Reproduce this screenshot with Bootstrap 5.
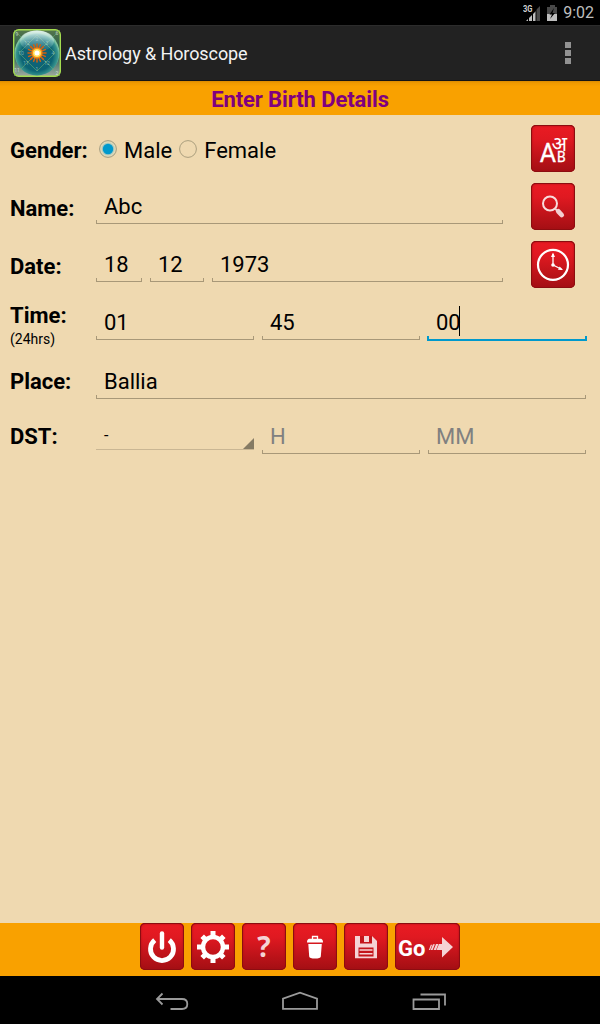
<!DOCTYPE html>
<html lang="en">
<head>
<meta charset="utf-8">
<meta name="viewport" content="width=device-width, initial-scale=1">
<title>Astrology &amp; Horoscope</title>
<link rel="stylesheet" href="https://cdn.jsdelivr.net/npm/bootstrap@5.3.0/dist/css/bootstrap.min.css">
<style>
body{font-family:Roboto,"Noto Sans",sans-serif;font-size:22px;line-height:26px;color:#000;background:#efd9b0;height:1024px;overflow:hidden}
svg{display:block;flex:none}
.status-bar{height:25px;background:#000;color:#bebebe;font-size:16px;line-height:25px;padding-right:6px}
.action-bar{height:56px;background:#222;border-top:1px solid #2c2c2c;border-bottom:1px solid #141414;color:#f3f3f3;font-size:18px;padding:0 29px 0 13px}
.app-name{letter-spacing:-.09px;padding-top:2px}
.page-title{height:34px;background:linear-gradient(#d98a00 0,#f09a00 2px,#f39d00 4px,#f9a100 5px);color:#800080;line-height:38px;letter-spacing:-.1px}
.form-area{padding:6px 13px 0 10px}
.line{height:58px}
.line-place{height:59px}
.lbl{width:86px;font-weight:700;flex:none}
.lbl small{display:block;font-size:14px;line-height:20px;font-weight:400}
.inputs{gap:8px}
.inputs.short{width:407px;flex:none}
.fld{position:relative;height:36px;padding:6px 8px 0;flex:1 1 0;white-space:nowrap}
.fld::after{content:"";position:absolute;left:0;right:0;bottom:0;height:4px;border:1px solid #a89878;border-top:0}
.fld.focused::after{left:-1px;right:-1px;bottom:-1px;height:5px;border:2px solid #0099cc;border-top:0}
.caret{display:inline-block;width:1px;height:30px;background:#000;margin:-4px 0 0 -2px;vertical-align:top}
.w-day{flex:0 0 46px}.w-mon{flex:0 0 54px}
.hint{color:#808080}
.spin{height:32px;font-size:16px;line-height:26px;padding-top:5px}
.spin::after{height:1px;border:0;background:#c9b693}
.spin svg{position:absolute;right:0;bottom:0}
.tile{width:44px;height:47px;border-radius:5px;background:linear-gradient(#ea1b23,#e01921 30%,#b81218 75%,#a30f14);border:0;padding:0;box-shadow:inset 0 0 0 1px #8c0d10,inset 0 0 2px 1px #a81116;flex:none}
.tile.wide{width:65px}
.side{margin-left:28px}
.tool-bar{height:53px;background:#f9a100;gap:7px}
.nav-keys{height:48px;background:#000}
</style>
</head>
<body class="d-flex flex-column m-0">
<div class="status-bar d-flex justify-content-end align-items-center">
  <svg width="18" height="18" viewBox="0 0 18 18"><path d="M3 17L13 7v10z" fill="#bebebe"/><path d="M13 6l4-4v15h-4z" fill="#484848"/><path d="M5.500 8v9M9.500 8v9M13 4v13" stroke="#000"/><path d="M0 1h9.500v7H0z" fill="#000"/><text x="0" y="8" font-size="9" font-weight="700" textLength="9.500" lengthAdjust="spacingAndGlyphs" fill="#d0d0d0" font-family="Roboto">3G</text></svg>
  <svg class="ms-1 me-1" width="14" height="18" viewBox="0 0 14 18"><path d="M2 3h3V1h5v2h2v14H2z" fill="#484848"/><path d="M2 10h10v7H2z" fill="#bebebe"/><path d="M9 4L4.500 10.500H7L5 15l5-6H7.500z" fill="#000"/></svg>
  <span>9:02</span>
</div>
<header class="action-bar d-flex align-items-center">
  <svg width="48" height="48" viewBox="0 0 48 48">
    <defs>
      <radialGradient id="orb" cx=".5" cy=".55" r=".5"><stop offset="0" stop-color="#12627a"/><stop offset=".7" stop-color="#0c6474"/><stop offset=".92" stop-color="#38958e"/><stop offset="1" stop-color="#7ec3a0"/></radialGradient>
      <linearGradient id="shine" x2="0" y2="1"><stop offset="0" stop-color="#fff" stop-opacity=".8"/><stop offset="1" stop-color="#8fd0d0" stop-opacity=".05"/></linearGradient>
      <linearGradient id="plate" x2="0" y2="1"><stop offset="0" stop-color="#56764c"/><stop offset=".5" stop-color="#1d584c"/><stop offset="1" stop-color="#a0aaa0"/></linearGradient>
    </defs>
    <rect x=".7" y=".7" width="46.600" height="46.600" rx="5" fill="url(#plate)" stroke="#a4dc50" stroke-width="1.400"/>
    <circle cx="24" cy="24" r="22.500" fill="url(#orb)"/>
    <path d="M1 1l46 46M47 1L1 47M24 6l18 18-18 18L6 24z" fill="none" stroke="#6cb070" stroke-width=".9" opacity=".6"/>
    <ellipse cx="24" cy="12" rx="17" ry="10.500" fill="url(#shine)"/>
    <g fill="#b8dcdc" font-size="5" opacity=".6" text-anchor="middle" font-family="Roboto"><text x="24" y="12">2</text><text x="14" y="16">12</text><text x="34" y="16">3</text><text x="8" y="26">10</text><text x="40" y="26">4</text><text x="13" y="36">11</text><text x="34" y="36">12</text><text x="24" y="42">1</text><text x="4" y="43" fill="#fff">11</text><text x="44" y="46" fill="#fff">2</text><text x="44" y="6" fill="#fff">6</text><text x="4" y="7" fill="#fff">9</text></g>
    <g stroke="#d4600f" stroke-width="1.500" stroke-linecap="round"><path d="M24 15v18M15 24h18M17.600 17.600l12.800 12.800M30.400 17.600L17.600 30.400M20.600 15.700l6.800 16.600M27.400 15.700l-6.800 16.600M15.700 20.600l16.600 6.800M15.700 27.400l16.600-6.800"/></g>
    <circle cx="24" cy="24" r="5.500" fill="#f28c18"/><circle cx="24" cy="24" r="4" fill="#ffe25c"/><circle cx="24" cy="24" r="2.500" fill="#fff"/>
  </svg>
  <span class="app-name ms-1">Astrology &amp; Horoscope</span>
  <svg class="ms-auto" width="6" height="22" viewBox="0 0 6 22" fill="#929292"><path d="M0 0h6v6H0zM0 8h6v6H0zM0 16h6v6H0z"/></svg>
</header>
<div class="page-title text-center fw-bold">Enter Birth Details</div>

<main class="form-area flex-grow-1">
  <div class="line d-flex">
    <div class="lbl" style="padding-top:17px">Gender:</div>
    <div class="inputs short d-flex" style="padding-top:17px;gap:0">
      <svg style="margin:2px 7px 0 3px" width="18" height="18" viewBox="0 0 18 18"><circle cx="9" cy="9" r="8.400" fill="#ddd8b8" stroke="#a39c80"/><circle cx="9" cy="9" r="6.300" fill="#a5c8c0"/><circle cx="9" cy="9" r="5.200" fill="#0099cc"/></svg>
      <span>Male</span>
      <svg style="margin:2px 7px 0" width="18" height="18" viewBox="0 0 18 18"><circle cx="9" cy="9" r="8.400" fill="none" stroke="#ab9f7e"/></svg>
      <span>Female</span>
    </div>
    <button class="tile side mt-1"><svg width="44" height="47" viewBox="0 0 44 47" fill="#fff"><text x="8.700" y="37" font-size="25" font-family="Roboto" stroke="#fff" stroke-width=".3">A</text><text x="26" y="37" font-size="14" font-family="Roboto" stroke="#fff" stroke-width=".3">B</text><text x="20.500" y="25.500" font-size="20" textLength="15.500" lengthAdjust="spacingAndGlyphs" font-family="'Noto Sans Devanagari','Noto Sans',sans-serif">अ</text></svg></button>
  </div>

  <div class="line d-flex">
    <div class="lbl" style="padding-top:17px">Name:</div>
    <div class="inputs short d-flex" style="padding-top:9px"><div class="fld">Abc</div></div>
    <button class="tile side mt-1"><svg width="44" height="47" viewBox="0 0 44 47"><circle cx="19" cy="20.500" r="7" fill="none" stroke="#f8dcdc" stroke-width="2"/><path d="M24 25.500l3 3" stroke="#f3cfd0" stroke-width="2"/><path d="M27.300 28.300l3.400 3.700" stroke="#f3cfd0" stroke-width="4.800" stroke-linecap="round"/></svg></button>
  </div>

  <div class="line d-flex">
    <div class="lbl" style="padding-top:17px">Date:</div>
    <div class="inputs short d-flex" style="padding-top:9px"><div class="fld w-day">18</div><div class="fld w-mon">12</div><div class="fld">1973</div></div>
    <button class="tile side mt-1"><svg width="44" height="47" viewBox="0 0 44 47"><circle cx="22" cy="23.800" r="15" fill="none" stroke="#fff" stroke-width="2.200"/><path d="M22 24V13M22 24l9 4.500" stroke="#fff" stroke-width="1.300"/><path d="M22 11.500l2 4.500h-4zM32 29l-5-.3 1.700-3.200z" fill="#fff"/><circle cx="22" cy="24" r="1.800" fill="#fff"/></svg></button>
  </div>

  <div class="line d-flex">
    <div class="lbl" style="padding-top:8px">Time:<small>(24hrs)</small></div>
    <div class="inputs d-flex flex-grow-1" style="padding-top:9px;padding-right:1px"><div class="fld">01</div><div class="fld">45</div><div class="fld focused">00<span class="caret"></span></div></div>
  </div>

  <div class="line line-place d-flex">
    <div class="lbl" style="padding-top:16px">Place:</div>
    <div class="inputs d-flex flex-grow-1" style="padding-top:10px;padding-right:1px"><div class="fld">Ballia</div></div>
  </div>

  <div class="line d-flex">
    <div class="lbl" style="padding-top:12px">DST:</div>
    <div class="inputs d-flex flex-grow-1" style="padding-top:6px;padding-right:1px"><div class="fld spin">-<svg width="12" height="12" viewBox="0 0 12 12"><path d="M12 0v12H0z" fill="#857b64"/></svg></div><div class="fld hint">H</div><div class="fld hint">MM</div></div>
  </div>
</main>

<footer class="tool-bar d-flex justify-content-center align-items-start">
  <button class="tile"><svg width="44" height="47" viewBox="0 0 44 47" fill="none" stroke="#fff"><path d="M14.700 17.200a11.500 11.500 0 1 0 14.600 0" stroke-width="4.800"/><path d="M22 10.500v14" stroke-width="4.400" stroke-linecap="round"/></svg></button>
  <button class="tile"><svg width="44" height="47" viewBox="0 0 44 47" fill="none" stroke="#fff"><circle cx="22" cy="24" r="10" stroke-width="4.400"/><path d="M22 8v5M22 35v5M6 24h5M33 24h5M11.200 13.200l3 3M29.800 31.800l3 3M11.200 34.800l3-3M29.800 16.200l3-3" stroke-width="5"/></svg></button>
  <button class="tile"><svg width="44" height="47" viewBox="0 0 44 47"><text x="22" y="34" text-anchor="middle" font-size="28" font-weight="700" font-family="Open Sans" fill="#f5d3d5">?</text></svg></button>
  <button class="tile"><svg width="44" height="47" viewBox="0 0 44 47" fill="#fff"><path d="M19.500 16v-2.500h5V16" fill="none" stroke="#fff" stroke-width="1.300"/><path d="M16 15.700h12q2 .5 2 3.800H14q0-3.300 2-3.800zM15.300 21h13.500l-1 12.500q-.3 2-5.800 2t-5.800-2z"/></svg></button>
  <button class="tile"><svg width="44" height="47" viewBox="0 0 44 47"><path d="M11 13h17l5 5v17.300H11z" fill="#f5d3d5"/><path d="M16 13v7.500h12V13h-3v6h-5v-6zM14.500 24.500h15v9h-15z" fill="#c4151b"/><path d="M20 13h4v6h-4zM15.500 26.300h13v1.500h-13zM15.500 30h13v1.500h-13z" fill="#f5d3d5"/></svg></button>
  <button class="tile wide"><svg width="65" height="47" viewBox="0 0 65 47"><text x="3" y="33" font-size="22" font-weight="700" font-family="Roboto" fill="#fff">Go</text><path d="M47 14l11 10-11 10.500V27h-5.500l2.500-6h3zM41 21h2.400L41 27h-2.400zM38 21.300h1.900l-2.300 5.700h-1.900zM35.800 21.800h1.300l-2 5.200h-1.300z" fill="#f5d3d5"/></svg></button>
</footer>
<nav class="nav-keys">
  <svg width="600" height="48" viewBox="0 0 600 48" fill="none" stroke="#9a9a9a" stroke-width="1.800"><path d="M162.500 17.500L157 23l5.500 5.500M157.500 23H182q5.300 0 5.300 5t-5.300 5h-11.500M283 32.800V22.700l17-6 17 6v10.100zM413.500 23.500H439V33h-25.500zM420.500 18.500H445v11"/></svg>
</nav>
<script src="https://cdn.jsdelivr.net/npm/bootstrap@5.3.0/dist/js/bootstrap.bundle.min.js"></script>
</body>
</html>
